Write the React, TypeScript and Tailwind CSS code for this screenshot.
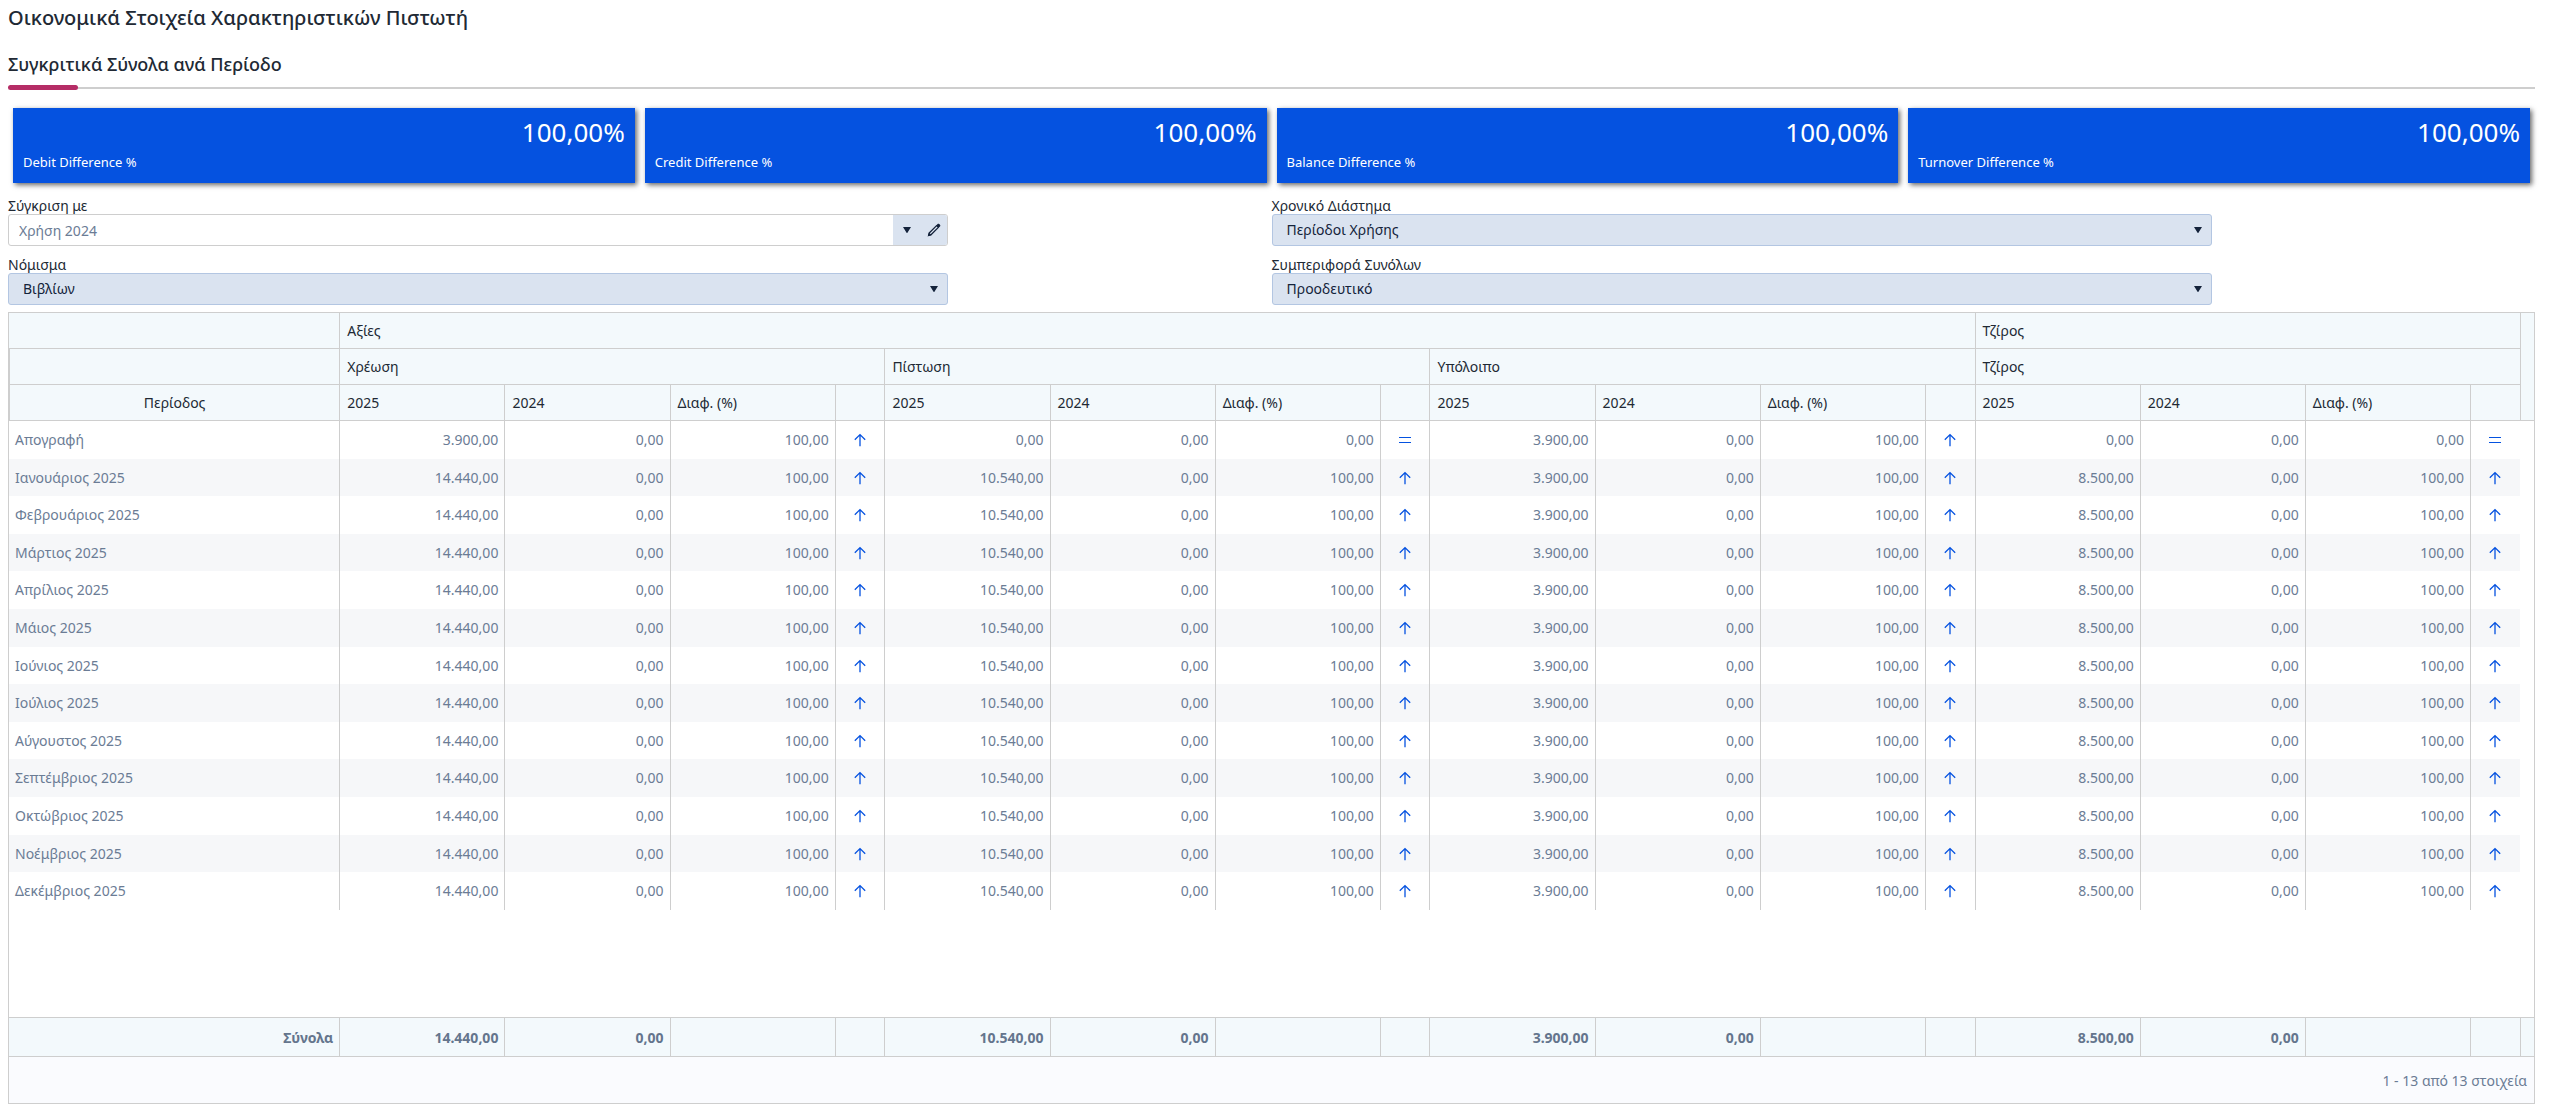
import { useState } from "react";

const cards = [
  { label: "Debit Difference %", value: "100,00%" },
  { label: "Credit Difference %", value: "100,00%" },
  { label: "Balance Difference %", value: "100,00%" },
  { label: "Turnover Difference %", value: "100,00%" },
];

const groups = ["Χρέωση", "Πίστωση", "Υπόλοιπο", "Τζίρος"];

const months = [
  "Ιανουάριος 2025",
  "Φεβρουάριος 2025",
  "Μάρτιος 2025",
  "Απρίλιος 2025",
  "Μάιος 2025",
  "Ιούνιος 2025",
  "Ιούλιος 2025",
  "Αύγουστος 2025",
  "Σεπτέμβριος 2025",
  "Οκτώβριος 2025",
  "Νοέμβριος 2025",
  "Δεκέμβριος 2025",
];

const totals = ["14.440,00", "10.540,00", "3.900,00", "8.500,00"];

const rows = [
  { period: "Απογραφή", values: ["3.900,00", "0,00", "3.900,00", "0,00"] },
  ...months.map((period) => ({ period, values: totals })),
];

const Caret = () => (
  <svg viewBox="0 0 8 6" className="h-[6px] w-[8px]" fill="#14233b">
    <path d="M0 0h8L4.6 5.6a.7.7 0 0 1-1.2 0z" />
  </svg>
);

const ArrowUp = () => (
  <svg
    viewBox="0 0 12 14"
    className="mx-auto h-[14px] w-[12px]"
    fill="none"
    stroke="#0552e0"
    strokeWidth="1.3"
  >
    <path d="M6 13.2V2M0.8 6.8L6 1.6l5.2 5.2" />
  </svg>
);

const Equals = () => (
  <svg
    viewBox="0 0 12 14"
    className="mx-auto h-[14px] w-[12px]"
    stroke="#0552e0"
    strokeWidth="1.2"
  >
    <path d="M0 4.5h12M0 9.5h12" />
  </svg>
);

const Pencil = () => (
  <svg viewBox="0 0 14 14" className="h-[14px] w-[14px]">
    <path
      fill="none"
      stroke="currentColor"
      strokeWidth="1.3"
      strokeLinejoin="round"
      d="M1.6 12.4l.6-2.4L9.6 2.6l1.8 1.8-7.4 7.4z"
    />
    <path
      fill="currentColor"
      d="M9.2 2.4l1.4-1.4c.5-.5 1.1-.5 1.6 0l.8.8c.5.5.5 1.1 0 1.6l-1.4 1.4zM2 9.4l2.6 2.6-4 1.4z"
    />
  </svg>
);

type SelectFieldProps = {
  id: string;
  label: string;
  options: string[];
};

const SelectField = ({ id, label, options }: SelectFieldProps) => {
  const [value, setValue] = useState(options[0]);

  return (
    <div className="flex w-[74.4%] flex-col">
      <label htmlFor={id} className="h-[18px] leading-5">
        {label}
      </label>
      <div className="relative">
        <select
          id={id}
          value={value}
          onChange={(e) => setValue(e.target.value)}
          className="h-8 w-full appearance-none rounded-[3px] border border-[#b3c6e2] bg-[#dae3f0] pr-8 pl-[14px] text-[#14233b]"
        >
          {options.map((option) => (
            <option key={option}>{option}</option>
          ))}
        </select>
        <span className="pointer-events-none absolute inset-y-0 right-[10px] flex items-center">
          <Caret />
        </span>
      </div>
    </div>
  );
};

const App = () => {
  const [compare, setCompare] = useState("Χρήση 2024");

  return (
    <main className="bg-white px-2 pb-[6px] font-['Noto_Sans',sans-serif] text-sm text-[#212934]">
      <div className="mr-[11px]">
        <h1 className="h-[38px] text-xl leading-9 font-medium">
          Οικονομικά Στοιχεία Χαρακτηριστικών Πιστωτή
        </h1>

        {/* Section title */}
        <h2 className="h-[47px] pt-[13px] text-lg leading-[26px] font-medium">
          Συγκριτικά Σύνολα ανά Περίοδο
        </h2>
        <div className="flex items-center">
          <div className="h-[5px] w-[70px] rounded-full bg-[#b52d66]" />
          <div className="h-[2px] flex-1 bg-[#cecece]" />
        </div>

        {/* Cards */}
        <div className="mt-[18px] grid grid-cols-4 gap-[10px] px-[5px]">
          {cards.map((card) => (
            <div
              key={card.label}
              className="flex h-[75px] flex-col justify-between bg-[#0552e0] px-[10px] pt-[6px] pb-3 text-white shadow-[2px_2px_5px_rgba(0,0,0,0.6)]"
            >
              <p className="text-right text-[26px] leading-9">{card.value}</p>
              <p className="text-[13px] leading-[18px]">{card.label}</p>
            </div>
          ))}
        </div>

        {/* Filters */}
        <div className="mt-[13px] grid grid-cols-2 gap-y-[9px]">
          <div className="flex w-[74.4%] flex-col">
            <label htmlFor="compare" className="h-[18px] leading-5">
              Σύγκριση με
            </label>
            <div className="flex h-8 overflow-hidden rounded-[3px] border border-[#cecece]">
              <input
                id="compare"
                value={compare}
                onChange={(e) => setCompare(e.target.value)}
                className="min-w-0 flex-1 px-[10px] pt-px text-[#6b7c95]"
              />
              <button
                aria-label="Άνοιγμα λίστας"
                className="flex w-[27px] items-center justify-center bg-[#dae3f0]"
              >
                <Caret />
              </button>
              <button
                aria-label="Επεξεργασία"
                className="flex w-[27px] items-center justify-center bg-[#dae3f0] text-[#14233b]"
              >
                <Pencil />
              </button>
            </div>
          </div>
          <SelectField
            id="range"
            label="Χρονικό Διάστημα"
            options={["Περίοδοι Χρήσης", "Ημερολογιακό"]}
          />
          <SelectField
            id="currency"
            label="Νόμισμα"
            options={["Βιβλίων", "Συναλλαγής"]}
          />
          <SelectField
            id="totals"
            label="Συμπεριφορά Συνόλων"
            options={["Προοδευτικό", "Ανά Περίοδο"]}
          />
        </div>

        {/* Grid */}
        <div className="mt-[7px] border border-[#cecece]">
          <table className="w-full table-fixed border-separate border-spacing-0">
            <colgroup>
              <col className="w-[13.08%]" />
              {groups.map((group) => [
                <col key={group + "a"} className="w-[6.54%]" />,
                <col key={group + "b"} className="w-[6.54%]" />,
                <col key={group + "c"} className="w-[6.54%]" />,
                <col key={group + "d"} className="w-[1.97%]" />,
              ])}
              <col />
            </colgroup>
            <thead className="bg-[#f3f9fc] text-left [&_th]:border-b [&_th]:border-[#cecece] [&_th]:px-[7px] [&_th]:font-normal">
              <tr className="h-9">
                <th />
                <th colSpan={12} className="border-l">
                  Αξίες
                </th>
                <th colSpan={4} className="border-l">
                  Τζίρος
                </th>
                <th rowSpan={3} className="border-l" />
              </tr>
              <tr className="h-9">
                <th className="border-l" />
                {groups.map((group) => (
                  <th key={group} colSpan={4} className="border-l">
                    {group}
                  </th>
                ))}
              </tr>
              <tr className="h-9">
                <th className="border-l text-center">Περίοδος</th>
                {groups.map((group) => [
                  <th key={group + "a"} className="border-l">
                    2025
                  </th>,
                  <th key={group + "b"} className="border-l">
                    2024
                  </th>,
                  <th key={group + "c"} className="border-l">
                    Διαφ. (%)
                  </th>,
                  <th key={group + "d"} className="border-l" />,
                ])}
              </tr>
            </thead>
            <tbody className="text-right text-[#6b7c95] [&_td]:border-[#cecece]">
              {rows.map((row, i) => (
                <tr
                  key={row.period}
                  className={`${(i % 5) % 2 ? "h-[37px]" : "h-[38px]"} ${
                    i % 2 ? "[&_td:not(:last-child)]:bg-[#f6f7f9]" : ""
                  }`}
                >
                  <td className="pl-[6px] text-left">{row.period}</td>
                  {row.values.map((value, j) => [
                    <td key={j + "a"} className="border-l pr-[6px]">
                      {value}
                    </td>,
                    <td key={j + "b"} className="border-l pr-[6px]">
                      0,00
                    </td>,
                    <td key={j + "c"} className="border-l pr-[6px]">
                      {value === "0,00" ? "0,00" : "100,00"}
                    </td>,
                    <td key={j + "d"} className="border-l">
                      {value === "0,00" ? <Equals /> : <ArrowUp />}
                    </td>,
                  ])}
                  <td />
                </tr>
              ))}
              <tr className="h-[107px]">
                <td colSpan={18} />
              </tr>
            </tbody>
            <tfoot className="bg-[#f3f9fc] text-right font-bold text-[#64758d] [&_td]:border-y [&_td]:border-[#cecece] [&_td]:pt-[2px] [&_td]:pr-[6px]">
              <tr className="h-10">
                <td>Σύνολα</td>
                {totals.map((total, j) => [
                  <td key={j + "a"} className="border-l">
                    {total}
                  </td>,
                  <td key={j + "b"} className="border-l">
                    0,00
                  </td>,
                  <td key={j + "c"} className="border-l" />,
                  <td key={j + "d"} className="border-l" />,
                ])}
                <td className="border-l" />
              </tr>
            </tfoot>
          </table>
          <div className="flex h-[46px] items-center justify-end bg-[#fafbfe] pt-[2px] pr-[7px] text-[#6b7c95]">
            1 - 13 από 13 στοιχεία
          </div>
        </div>
      </div>
    </main>
  );
};

export default App;
